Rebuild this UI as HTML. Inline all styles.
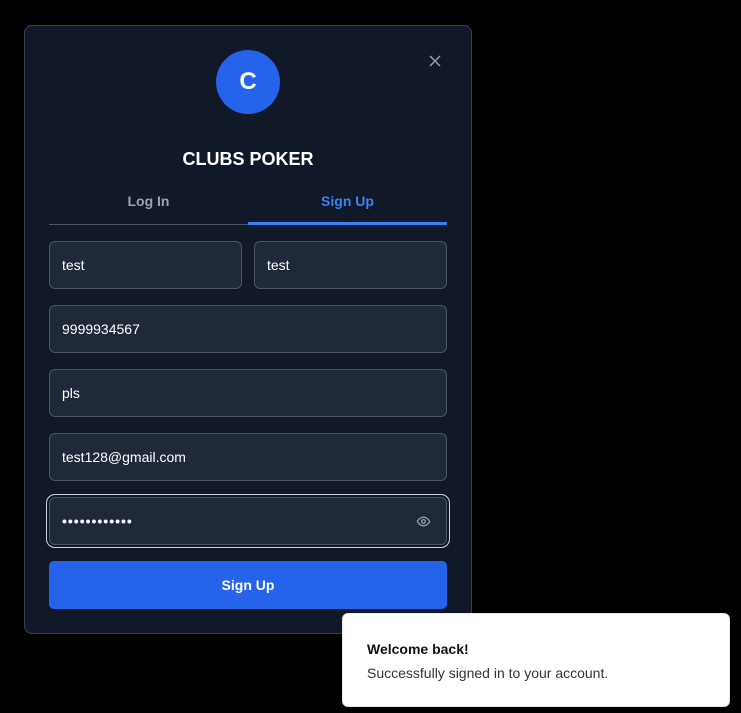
<!DOCTYPE html>
<html><head><style>
*{box-sizing:border-box;margin:0;padding:0}
body{width:741px;height:713px;background:#000;font-family:"Liberation Sans",sans-serif;position:relative;overflow:hidden}
.card{position:absolute;left:24px;top:25px;width:448px;height:609px;background:#111827;border:1px solid #374151;border-radius:8px}
.logo{position:absolute;left:191px;top:24px;width:64px;height:64px;border-radius:50%;background:#2563eb;color:#fff;font-weight:bold;font-size:24px;text-align:center;line-height:64px}
.x{position:absolute;left:404px;top:29px}
.title{position:absolute;left:0;width:446px;top:123px;text-align:center;color:#fff;font-weight:bold;font-size:18px}
.tabs{position:absolute;left:24px;top:165px;width:398px;height:34px;border-bottom:1px solid #4b5563}
.tab{position:absolute;top:2px;width:199px;text-align:center;font-size:14px;font-weight:bold}
.ul{position:absolute;left:199px;width:199px;bottom:-1px;height:3px;background:#3b82f6}
.in{position:absolute;height:48px;background:#1f2937;border:1px solid #4b5563;border-radius:6px;color:#fff;font-size:14px;padding-left:12px;line-height:46px}
.btn{position:absolute;left:24px;top:535px;width:398px;height:48px;background:#2563eb;border-radius:5px;color:#fff;font-weight:bold;font-size:14px;text-align:center;line-height:48px}
.toast{position:absolute;left:342px;top:613px;width:388px;height:94px;background:#fff;border-radius:6px;border:1px solid #e5e7eb}
</style></head><body>
<div class="card">
<div class="logo">C</div>
<svg class="x" width="12" height="12" viewBox="0 0 12 12" stroke="#9ca3af" stroke-width="1.4"><path d="M1 1L11 11M11 1L1 11"/></svg>
<div class="title">CLUBS POKER</div>
<div class="tabs"><div class="tab" style="left:0;color:#9ca3af">Log In</div><div class="tab" style="left:199px;color:#3b82f6">Sign Up</div><div class="ul"></div></div>
<div class="in" style="left:24px;top:215px;width:193px">test</div>
<div class="in" style="left:229px;top:215px;width:193px">test</div>
<div class="in" style="left:24px;top:279px;width:398px">9999934567</div>
<div class="in" style="left:24px;top:343px;width:398px">pls</div>
<div class="in" style="left:24px;top:407px;width:398px">test128@gmail.com</div>
<div class="in" style="left:24px;top:471px;width:398px;box-shadow:0 0 0 2px #111827,0 0 0 3px #d1d5db;letter-spacing:1px;font-weight:bold">••••••••••••
<svg style="position:absolute;right:15px;top:16px" width="15" height="15" viewBox="0 0 24 24" fill="none" stroke="#9ca3af" stroke-width="2"><path d="M2 12s4-7 10-7 10 7 10 7-4 7-10 7S2 12 2 12z"/><circle cx="12" cy="12" r="3"/></svg></div>
<div class="btn">Sign Up</div>
</div>
<div class="toast">
<div style="position:absolute;left:24px;top:27px;font-size:14px;font-weight:bold;color:#111">Welcome back!</div>
<div style="position:absolute;left:24px;top:51px;font-size:14px;color:#333">Successfully signed in to your account.</div>
</div>
</body></html>
